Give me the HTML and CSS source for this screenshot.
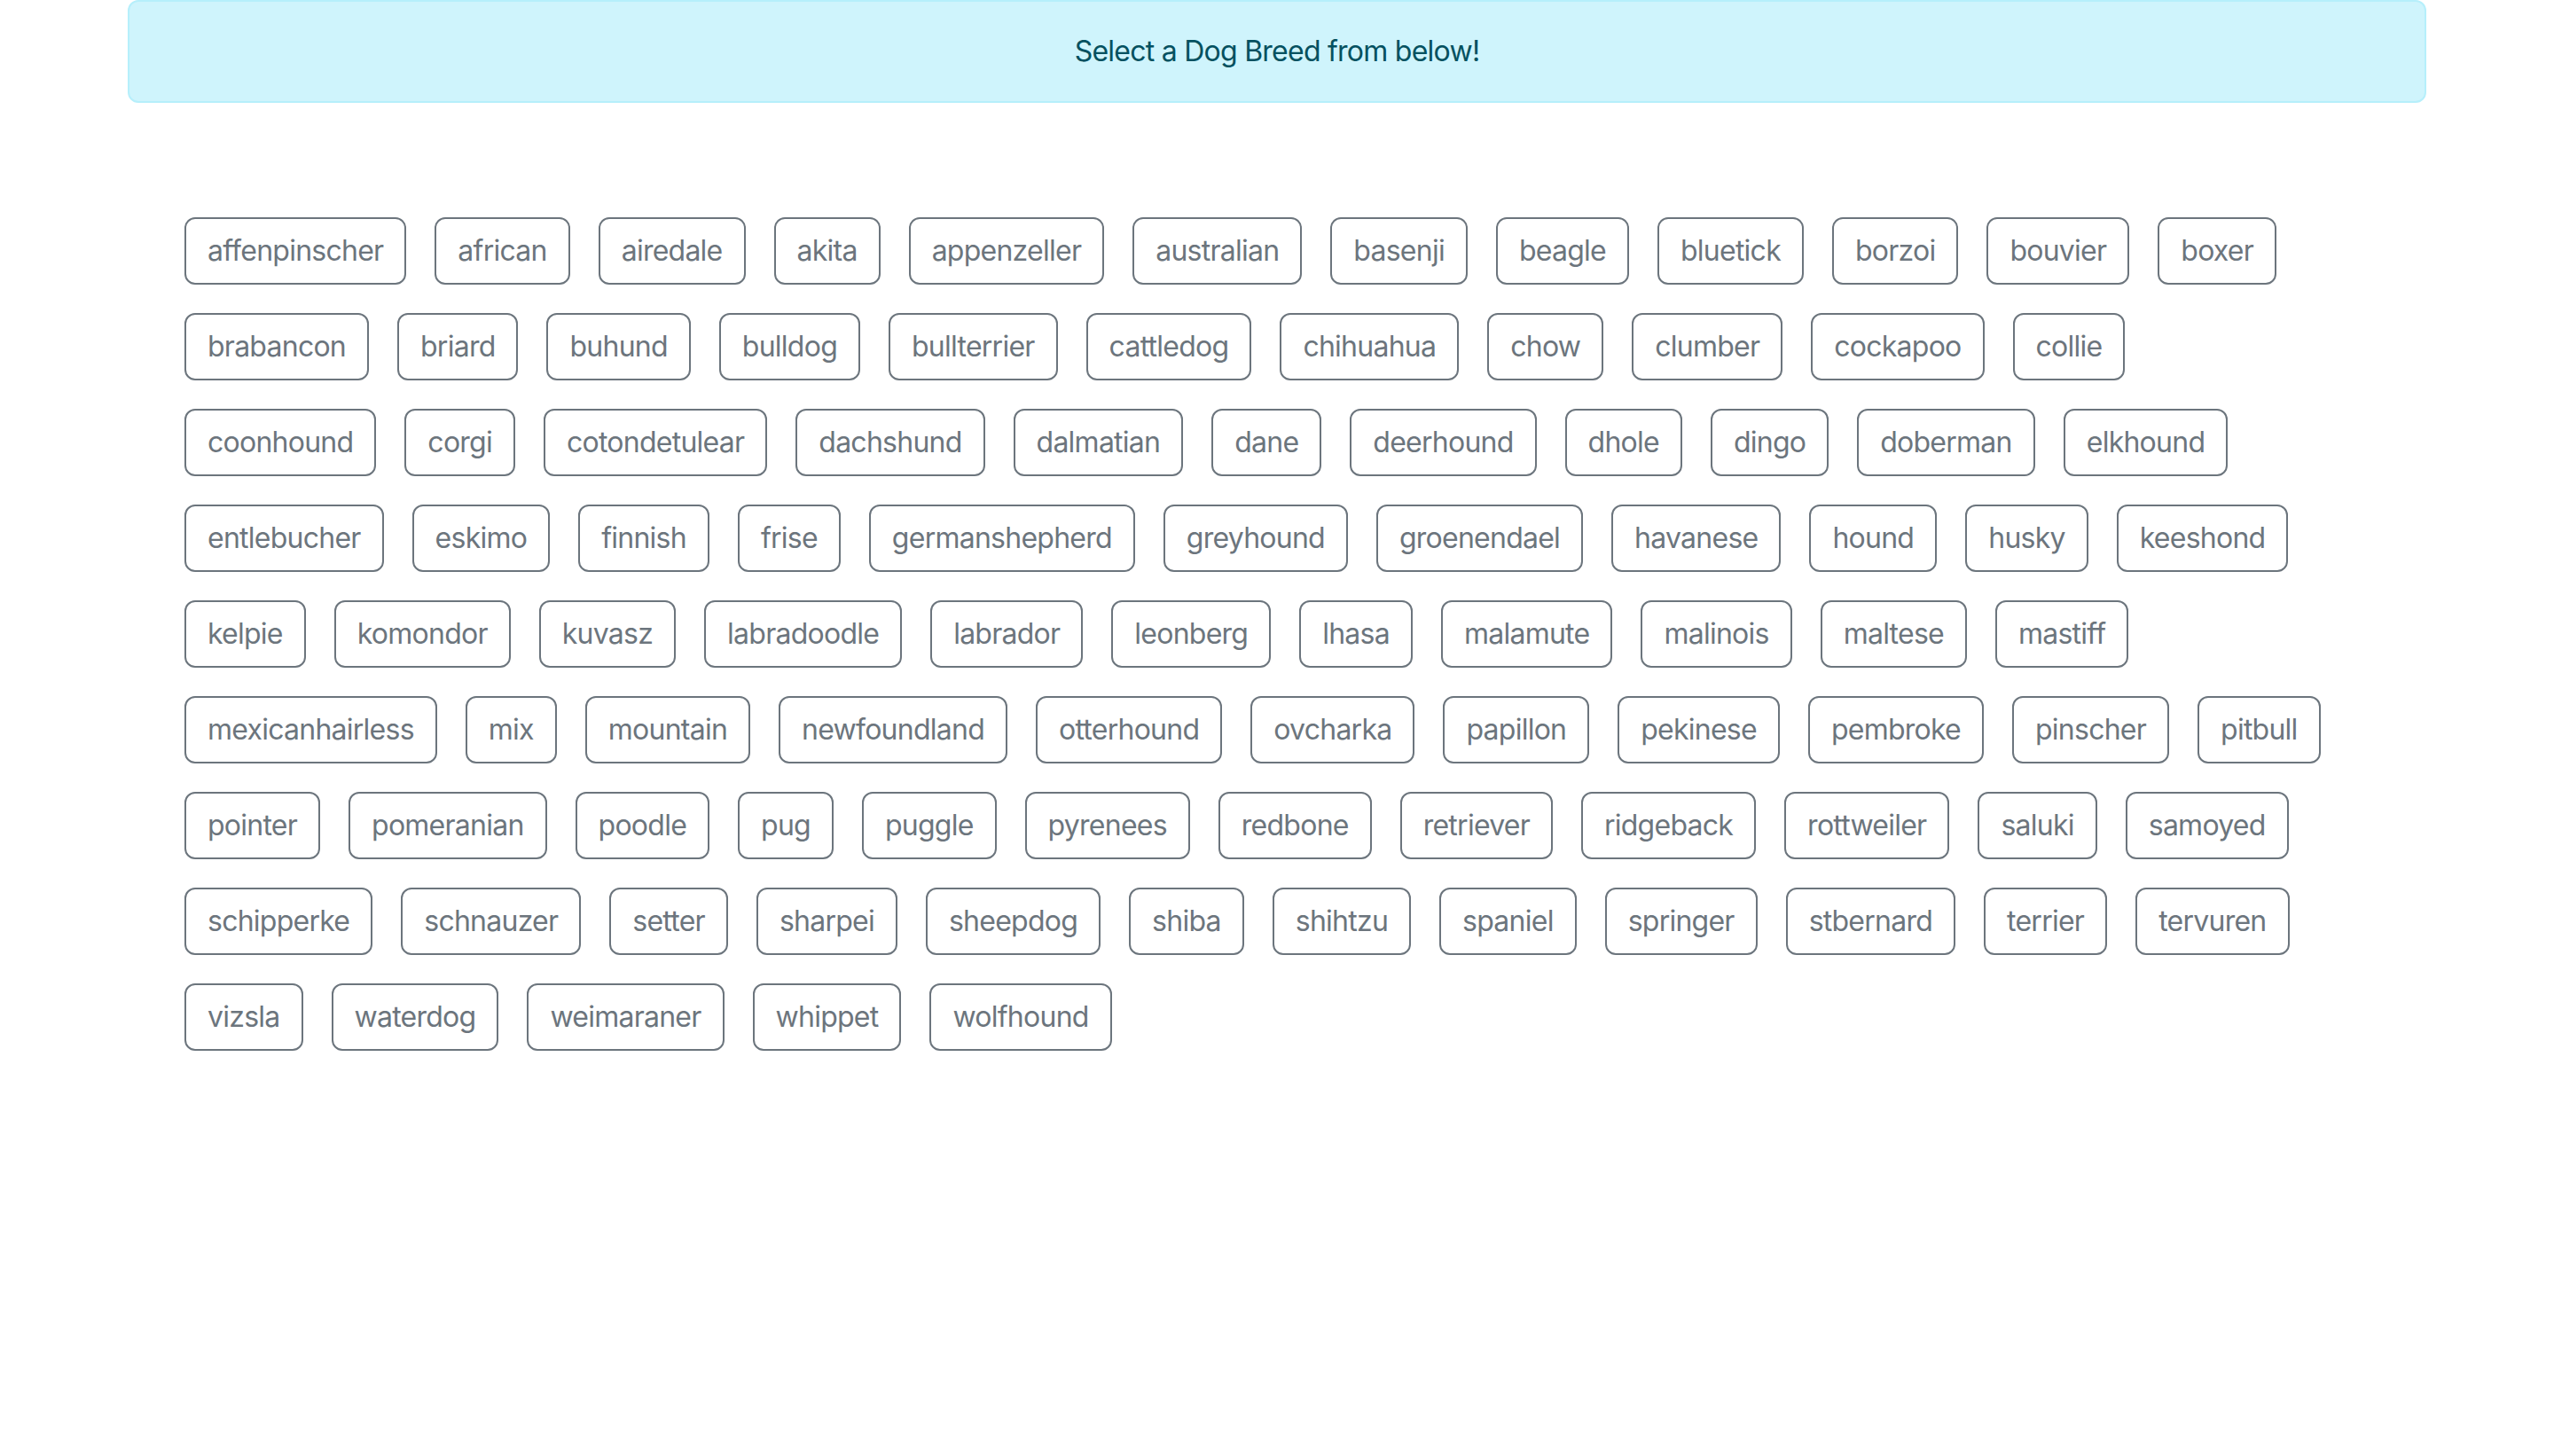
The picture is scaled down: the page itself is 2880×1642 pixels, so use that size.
FILE: index.html
```html
<!DOCTYPE html>
<html lang="en">
<head>
<meta charset="utf-8">
<title>Dog Breeds</title>
<link rel="stylesheet" href="styles.css">
</head>
<body>
<div class="container">
  <div class="alert">Select a Dog Breed from below!</div>
  <div class="breeds">
    <button class="btn">affenpinscher</button>
    <button class="btn">african</button>
    <button class="btn">airedale</button>
    <button class="btn">akita</button>
    <button class="btn">appenzeller</button>
    <button class="btn">australian</button>
    <button class="btn">basenji</button>
    <button class="btn">beagle</button>
    <button class="btn">bluetick</button>
    <button class="btn">borzoi</button>
    <button class="btn">bouvier</button>
    <button class="btn">boxer</button>
    <button class="btn">brabancon</button>
    <button class="btn">briard</button>
    <button class="btn">buhund</button>
    <button class="btn">bulldog</button>
    <button class="btn">bullterrier</button>
    <button class="btn">cattledog</button>
    <button class="btn">chihuahua</button>
    <button class="btn">chow</button>
    <button class="btn">clumber</button>
    <button class="btn">cockapoo</button>
    <button class="btn">collie</button>
    <button class="btn">coonhound</button>
    <button class="btn">corgi</button>
    <button class="btn">cotondetulear</button>
    <button class="btn">dachshund</button>
    <button class="btn">dalmatian</button>
    <button class="btn">dane</button>
    <button class="btn">deerhound</button>
    <button class="btn">dhole</button>
    <button class="btn">dingo</button>
    <button class="btn">doberman</button>
    <button class="btn">elkhound</button>
    <button class="btn">entlebucher</button>
    <button class="btn">eskimo</button>
    <button class="btn">finnish</button>
    <button class="btn">frise</button>
    <button class="btn">germanshepherd</button>
    <button class="btn">greyhound</button>
    <button class="btn">groenendael</button>
    <button class="btn">havanese</button>
    <button class="btn">hound</button>
    <button class="btn">husky</button>
    <button class="btn">keeshond</button>
    <button class="btn">kelpie</button>
    <button class="btn">komondor</button>
    <button class="btn">kuvasz</button>
    <button class="btn">labradoodle</button>
    <button class="btn">labrador</button>
    <button class="btn">leonberg</button>
    <button class="btn">lhasa</button>
    <button class="btn">malamute</button>
    <button class="btn">malinois</button>
    <button class="btn">maltese</button>
    <button class="btn">mastiff</button>
    <button class="btn">mexicanhairless</button>
    <button class="btn">mix</button>
    <button class="btn">mountain</button>
    <button class="btn">newfoundland</button>
    <button class="btn">otterhound</button>
    <button class="btn">ovcharka</button>
    <button class="btn">papillon</button>
    <button class="btn">pekinese</button>
    <button class="btn">pembroke</button>
    <button class="btn">pinscher</button>
    <button class="btn">pitbull</button>
    <button class="btn">pointer</button>
    <button class="btn">pomeranian</button>
    <button class="btn">poodle</button>
    <button class="btn">pug</button>
    <button class="btn">puggle</button>
    <button class="btn">pyrenees</button>
    <button class="btn">redbone</button>
    <button class="btn">retriever</button>
    <button class="btn">ridgeback</button>
    <button class="btn">rottweiler</button>
    <button class="btn">saluki</button>
    <button class="btn">samoyed</button>
    <button class="btn">schipperke</button>
    <button class="btn">schnauzer</button>
    <button class="btn">setter</button>
    <button class="btn">sharpei</button>
    <button class="btn">sheepdog</button>
    <button class="btn">shiba</button>
    <button class="btn">shihtzu</button>
    <button class="btn">spaniel</button>
    <button class="btn">springer</button>
    <button class="btn">stbernard</button>
    <button class="btn">terrier</button>
    <button class="btn">tervuren</button>
    <button class="btn">vizsla</button>
    <button class="btn">waterdog</button>
    <button class="btn">weimaraner</button>
    <button class="btn">whippet</button>
    <button class="btn">wolfhound</button>
  </div>
</div>
</body>
</html>
```
FILE: styles.css
```css
html, body {
  margin: 0;
  padding: 0;
  background: #ffffff;
}
body {
  font-family: Inter, "Liberation Sans", sans-serif;
  font-size: 32px;
  line-height: 1.5;
  letter-spacing: -0.75px;
  color: #212529;
}
.container {
  width: 2592px;
  margin: 0 auto;
}
.alert {
  box-sizing: border-box;
  height: 116px;
  padding: 32px;
  background: #cff4fc;
  border: 2px solid #b6effb;
  border-radius: 12px;
  color: #055160;
  text-align: center;
}
.breeds {
  display: flex;
  flex-wrap: wrap;
  gap: 32px;
  padding: 129px 106px 0 64px;
}
.btn {
  box-sizing: border-box;
  height: 76px;
  padding: 12px 24px;
  font-family: inherit;
  font-size: 32px;
  line-height: 48px;
  letter-spacing: -0.75px;
  color: #6c757d;
  background: transparent;
  border: 2px solid #6c757d;
  border-radius: 12px;
}
```
